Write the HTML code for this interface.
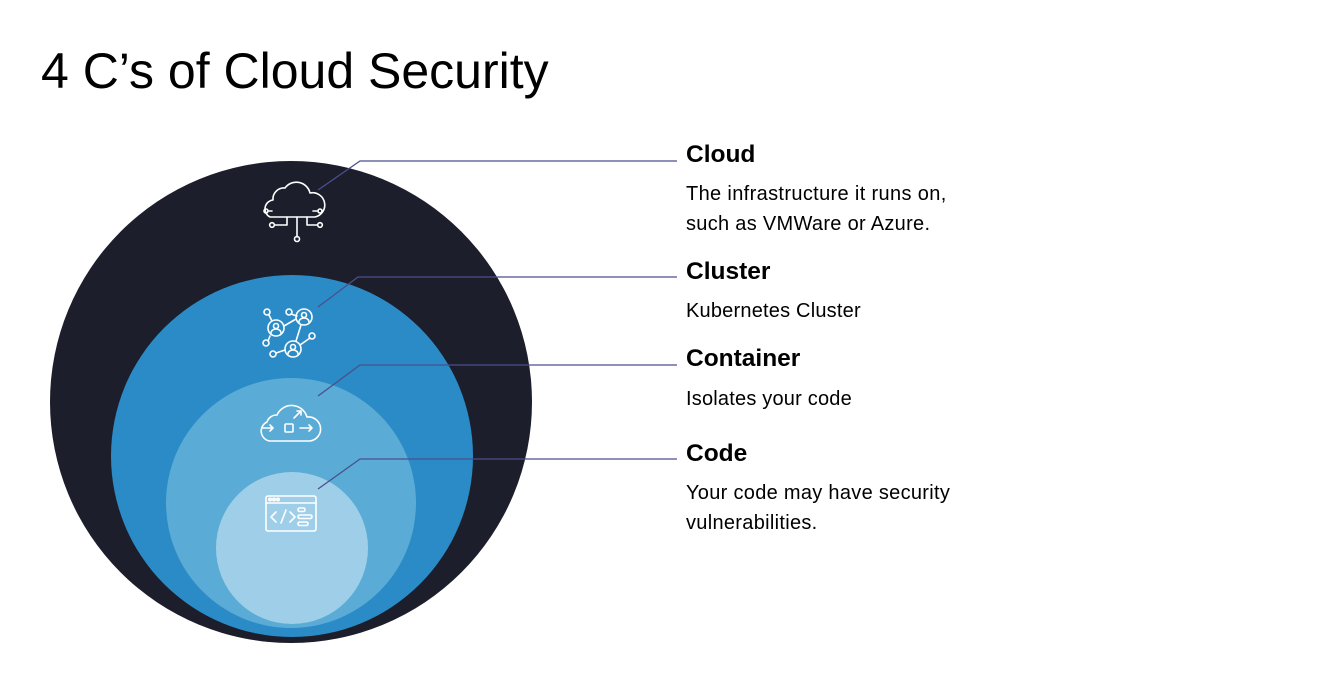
<!DOCTYPE html>
<html><head><meta charset="utf-8"><style>
html,body{margin:0;padding:0;background:#fff;width:1338px;height:673px;overflow:hidden}
svg{display:block}
text{font-family:"Liberation Sans",Arial,sans-serif}
</style></head><body>
<svg width="1338" height="673" viewBox="0 0 1338 673" xmlns="http://www.w3.org/2000/svg">
<text x="41" y="88" font-size="50" fill="#000">4 C’s of Cloud Security</text>
<circle cx="291" cy="402" r="241" fill="#1c1e2b"/>
<circle cx="292" cy="456" r="181" fill="#2a8bc7"/>
<circle cx="291" cy="503" r="125" fill="#5aabd6"/>
<circle cx="292" cy="548" r="76" fill="#9fcfe8"/>
<g stroke="#4b4f8c" stroke-width="1.3" fill="none">
<polyline points="318,190 360,161 677,161"/>
<polyline points="318,307 358,277 677,277"/>
<polyline points="318,396 360,365 677,365"/>
<polyline points="318,489 360,459 677,459"/>
</g>
<g stroke="#fff" stroke-width="1.6" fill="none" stroke-linecap="round" stroke-linejoin="round">
<path d="M270,217 a9,9 0 0 1 3,-17 a11,11 0 0 1 12,-12 a14,14 0 0 1 25,5 a12,12 0 0 1 5,24 z"/>
<path d="M287,217 v8 h-12 M297,217 v20 M307,217 v8 h10"/>
<path d="M272,211 h-3 M313,211 h4"/>
<circle cx="266" cy="211" r="2"/><circle cx="320" cy="211" r="2"/>
<circle cx="272" cy="225" r="2.3"/><circle cx="320" cy="225" r="2.3"/>
<circle cx="297" cy="239" r="2.5"/>
<circle cx="276" cy="328" r="8"/><circle cx="304" cy="317" r="8"/><circle cx="293" cy="349" r="8"/>
<circle cx="276" cy="326" r="2.5"/><path d="M271,333 a5,4 0 0 1 10,0"/>
<circle cx="304" cy="315" r="2.5"/><path d="M299,322 a5,4 0 0 1 10,0"/>
<circle cx="293" cy="347" r="2.5"/><path d="M288,354 a5,4 0 0 1 10,0"/>
<circle cx="267" cy="312" r="3"/><circle cx="289" cy="312" r="3"/><circle cx="312" cy="336" r="3"/>
<circle cx="266" cy="343" r="3"/><circle cx="273" cy="354" r="3"/>
<path d="M269,315 L272,321 M291,314 L297,316 M284,326 L296,319 M301,325 L296,341 M310,338 L300,345 M268,341 L270,336 M276,353 L285,350"/>
<path d="M270,441 a10,10 0 0 1 -3,-19 a10,10 0 0 1 10,-7 a16,16 0 0 1 30,2 a12,12 0 0 1 3,24 z"/>
<path d="M263,428 h10 M270,425 l3,3 l-3,3 M300,428 h12 M309,425 l3,3 l-3,3 M294,418 l7,-7 M297,411 h4 v4"/>
<rect x="285" y="424" width="8" height="8" rx="1"/>
<rect x="266" y="496" width="50" height="35" rx="2"/>
<path d="M266,503 h50"/>
<circle cx="270" cy="499.5" r="1.2"/><circle cx="274" cy="499.5" r="1.2"/><circle cx="278" cy="499.5" r="1.2"/>
<path d="M276,512 l-5,5 l5,5 M281,523 l5,-13 M290,512 l5,5 l-5,5"/>
<rect x="298" y="508" width="7" height="3.5" rx="1.7"/><rect x="298" y="515" width="14" height="3.5" rx="1.7"/><rect x="298" y="522" width="10" height="3.5" rx="1.7"/>
</g>
<g fill="#000">
<text x="686" y="162" font-size="24.5" font-weight="bold">Cloud</text>
<text x="686" y="200" font-size="20" letter-spacing="0.35">The infrastructure it runs on,</text>
<text x="686" y="230" font-size="20" letter-spacing="0.3">such as VMWare or Azure.</text>
<text x="686" y="279" font-size="24.5" font-weight="bold">Cluster</text>
<text x="686" y="317" font-size="20" letter-spacing="0.2">Kubernetes Cluster</text>
<text x="686" y="366" font-size="24.5" font-weight="bold">Container</text>
<text x="686" y="405" font-size="20" letter-spacing="0.2">Isolates your code</text>
<text x="686" y="461" font-size="24.5" font-weight="bold">Code</text>
<text x="686" y="499" font-size="20" letter-spacing="0.3">Your code may have security</text>
<text x="686" y="529" font-size="20" letter-spacing="0.3">vulnerabilities.</text>
</g>
</svg>
</body></html>
